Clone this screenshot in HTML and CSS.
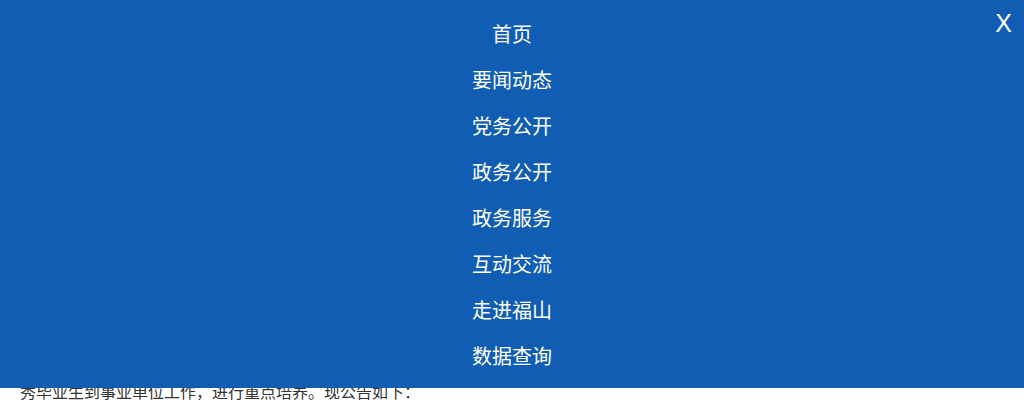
FILE: index.html
```html
<!DOCTYPE html>
<html lang="zh-CN">
<head>
<meta charset="utf-8">
<title>菜单</title>
<link rel="stylesheet" href="styles.css">
</head>
<body>
<div class="page">
  <p class="para">秀毕业生到事业单位工作，进行重点培养。现公告如下：</p>
</div>
<nav class="menu">
  <ul class="menu-list">
    <li><a href="#">首页</a></li>
    <li><a href="#">要闻动态</a></li>
    <li><a href="#">党务公开</a></li>
    <li><a href="#">政务公开</a></li>
    <li><a href="#">政务服务</a></li>
    <li><a href="#">互动交流</a></li>
    <li><a href="#">走进福山</a></li>
    <li><a href="#">数据查询</a></li>
  </ul>
  <span class="close">X</span>
</nav>
</body>
</html>
```
FILE: styles.css
```css
html, body {
  margin: 0;
  padding: 0;
  background: #fff;
  font-family: "Noto Sans CJK SC", "Noto Sans", sans-serif;
}
.page {
  padding: 379px 20px 0;
}
.para {
  margin: 0;
  font-size: 16px;
  line-height: 24px;
  color: #333;
}
.menu {
  position: fixed;
  top: 0;
  left: 0;
  width: 100%;
  height: 388px;
  background: #105db3;
}
.menu-list {
  list-style: none;
  margin: 0;
  padding: 11px 0 0;
  text-align: center;
}
.menu-list li {
  line-height: 46px;
  font-size: 20px;
}
.menu-list a {
  color: #fff;
  text-decoration: none;
}
.close {
  position: absolute;
  top: 8px;
  right: 12px;
  color: #fff;
  font-family: "Liberation Sans", Arial, sans-serif;
  font-size: 25px;
  line-height: 30px;
}
```
